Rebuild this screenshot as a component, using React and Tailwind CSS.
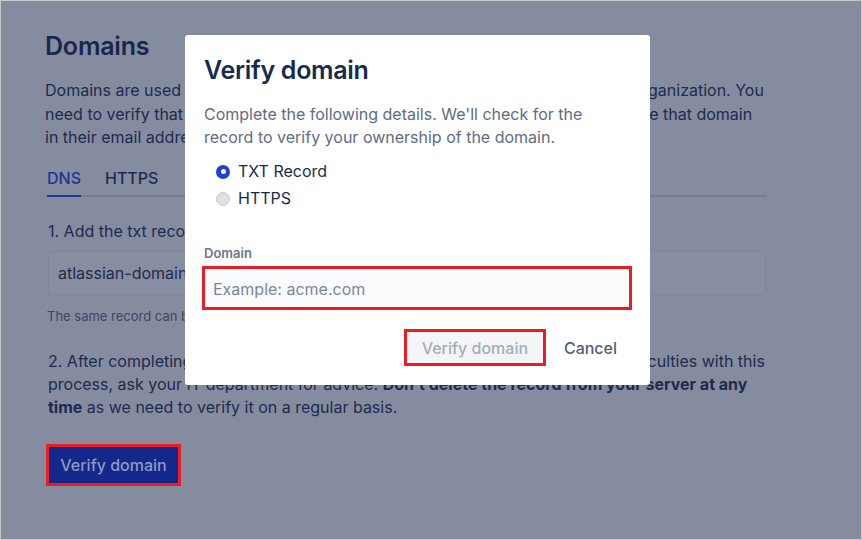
import React from "react";

const FONT = { fontFamily: "Inter, 'Noto Sans', sans-serif" };

export default function App() {
  return (
    <div
      className="relative w-[862px] h-[540px] overflow-hidden border border-[#c8c9cc] bg-[#858c9f] text-[#1e2a4f]"
      style={FONT}
    >
      {/* страница под затемнением */}
      <div className="pl-[44px] pt-[30px] w-[780px]">
        <h1 className="text-[25px] leading-[30px] font-semibold text-[#1b2650] tracking-[-0.2px]">Domains</h1>
        <p className="mt-[18px] text-[16px] leading-[23.5px] whitespace-nowrap">
          Domains are used to identify the people and the accounts that belong to your organization. You
          <br />
          need to verify that you own a domain before you can manage the people that use that domain
          <br />
          in their email addresses.
        </p>

        <div className="mt-[18px] ml-[2px] w-[720px] flex gap-[24px] border-b-2 border-[#767d92] text-[16px] leading-[20px] font-medium">
          <div className="-mb-[2px] pb-[7px] border-b-2 border-[#1d3596] text-[#1d3596]">DNS</div>
          <div className="pb-[7px]">HTTPS</div>
        </div>

        <div className="mt-[23px] ml-[3px] text-[16px] leading-[22px]">1. Add the txt record below to your DNS server</div>
        <div className="mt-[9px] ml-[3px] w-[718px] h-[44px] rounded-[3px] border border-[#7f869a] bg-[#878ea2] flex items-center pl-[9px] text-[16px]">
          atlassian-domain-verification=7e4c0a1f-2b9d-4c6e-b1a3-9f8d2e5c7a10
        </div>
        <div className="mt-[12px] ml-[2px] text-[13px] leading-[18px] text-[#3d4668]">
          The same record can be used to verify multiple domains.
        </div>

        <p className="mt-[25px] ml-[3px] text-[16px] leading-[23px] whitespace-nowrap">
          2. After completing the step above, click the Verify domain. If you have any difficulties with this
          <br />
          process, ask your IT department for advice. <b className="font-bold">Don't delete the record from your server at any</b>
          <br />
          <b className="font-bold">time</b> as we need to verify it on a regular basis.
        </p>

        <button className="mt-[25px] ml-[1px] h-[42px] w-[135px] border-[3px] border-[#ea1c24] bg-[#13288a] text-[16px] font-medium text-[#8e99c2]">
          Verify domain
        </button>
      </div>

      {/* модальное окно */}
      <div className="absolute left-[184px] top-[34px] w-[465px] h-[350px] rounded-[3px] bg-white pl-[19px] pt-[19px]">
        <h2 className="text-[25px] leading-[32px] font-semibold text-[#172b4d] tracking-[-0.3px]">Verify domain</h2>
        <p className="mt-[17px] text-[16px] leading-[23px] text-[#5e6c84]">
          Complete the following details. We'll check for the
          <br />
          record to verify your ownership of the domain.
        </p>

        <div className="mt-[9px] ml-[12px] text-[16px] leading-[27px] text-[#172b4d]">
          <label className="flex items-center gap-[8px]">
            <span className="w-[14px] h-[14px] rounded-full bg-[#1f3fd6] flex items-center justify-center">
              <span className="w-[5px] h-[5px] rounded-full bg-white" />
            </span>
            TXT Record
          </label>
          <label className="flex items-center gap-[8px]">
            <span className="w-[14px] h-[14px] rounded-full bg-[#dfe1e6] border border-[#c9ccd4]" />
            HTTPS
          </label>
        </div>

        <div className="mt-[33px] text-[13px] leading-[16px] font-semibold text-[#6b778c]">Domain</div>
        <div className="mt-[5px] -ml-[2px] w-[430px] h-[44px] border-[3px] border-[#ea1c24] bg-[#fafbfc] flex items-center pl-[8px] pt-[2px] text-[16px] text-[#7a869a]">
          Example: acme.com
        </div>

        <div className="mt-[19px] flex justify-end items-center gap-[18px] pr-[33px]">
          <button className="h-[37px] w-[142px] border-[3px] border-[#ea1c24] bg-[#f4f5f7] text-[16px] font-medium text-[#a5adba]">
            Verify domain
          </button>
          <button className="text-[16px] font-medium text-[#505f79]">Cancel</button>
        </div>
      </div>
    </div>
  );
}
